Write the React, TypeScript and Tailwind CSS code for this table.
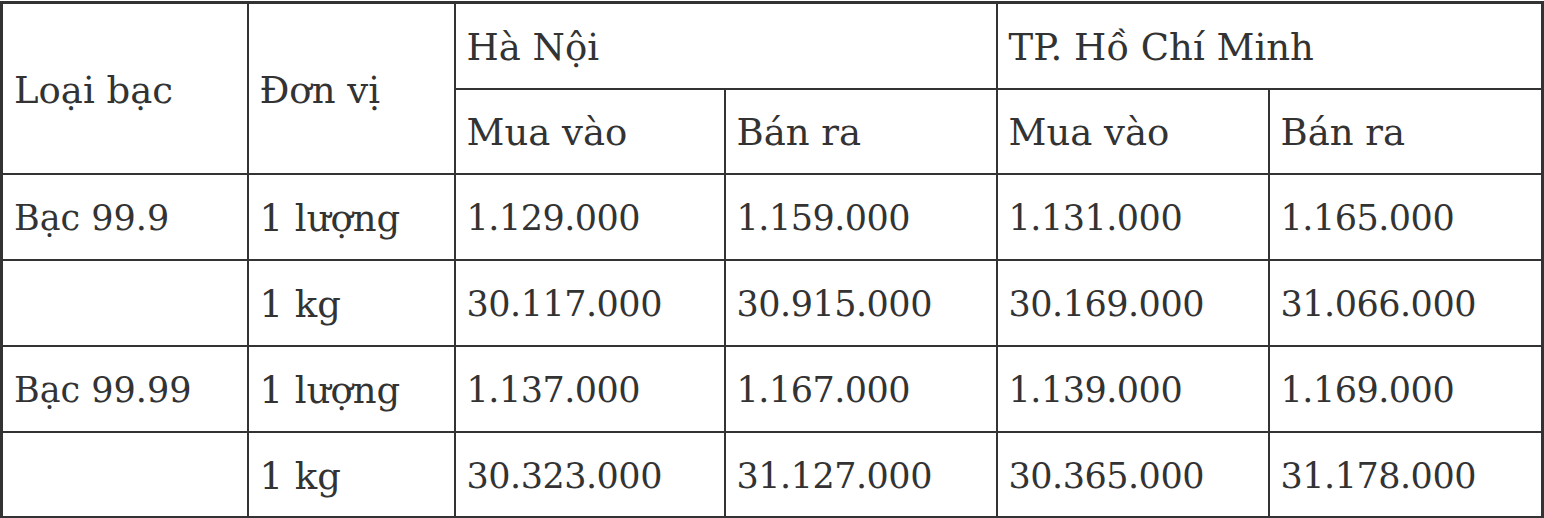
import React from 'react';

const rows = [
  { type: 'Bạc 99.9', unit: '1 lượng', values: ['1.129.000', '1.159.000', '1.131.000', '1.165.000'] },
  { type: '', unit: '1 kg', values: ['30.117.000', '30.915.000', '30.169.000', '31.066.000'] },
  { type: 'Bạc 99.99', unit: '1 lượng', values: ['1.137.000', '1.167.000', '1.139.000', '1.169.000'] },
  { type: '', unit: '1 kg', values: ['30.323.000', '31.127.000', '30.365.000', '31.178.000'] },
];

const cell = 'border-2 border-[#333] pl-[11px] pr-[10px] pt-[4px] align-middle text-left font-normal';
const label = `${cell} text-[37px]`;
const kind = `${cell} text-[35px]`;
const num = `${cell} text-[35px] tracking-[-0.5px]`;

const App = () => {
  return (
    <div className="bg-white min-h-screen pt-px" style={{ fontFamily: '"DejaVu Serif", "Liberation Serif", serif' }}>
      <table className="table-fixed border-collapse border-[3px] border-[#333] w-[1541px] text-[#333]">
        <colgroup>
          <col className="w-[246px]" />
          <col className="w-[207px]" />
          <col className="w-[270px]" />
          <col className="w-[272px]" />
          <col className="w-[272px]" />
          <col className="w-[274px]" />
        </colgroup>
        <thead>
          <tr className="h-[86px]">
            <th rowSpan={2} className={label}>Loại bạc</th>
            <th rowSpan={2} className={label}>Đơn vị</th>
            <th colSpan={2} className={label}>Hà Nội</th>
            <th colSpan={2} className={label}>TP. Hồ Chí Minh</th>
          </tr>
          <tr className="h-[85px]">
            <th className={label}>Mua vào</th>
            <th className={label}>Bán ra</th>
            <th className={label}>Mua vào</th>
            <th className={label}>Bán ra</th>
          </tr>
        </thead>
        <tbody>
          {rows.map((row, i) => (
            <tr key={i} className="h-[86px]">
              <td className={kind}>{row.type}</td>
              <td className={label}>{row.unit}</td>
              {row.values.map((v, j) => (
                <td key={j} className={num}>{v}</td>
              ))}
            </tr>
          ))}
        </tbody>
      </table>
    </div>
  );
};

export default App;
